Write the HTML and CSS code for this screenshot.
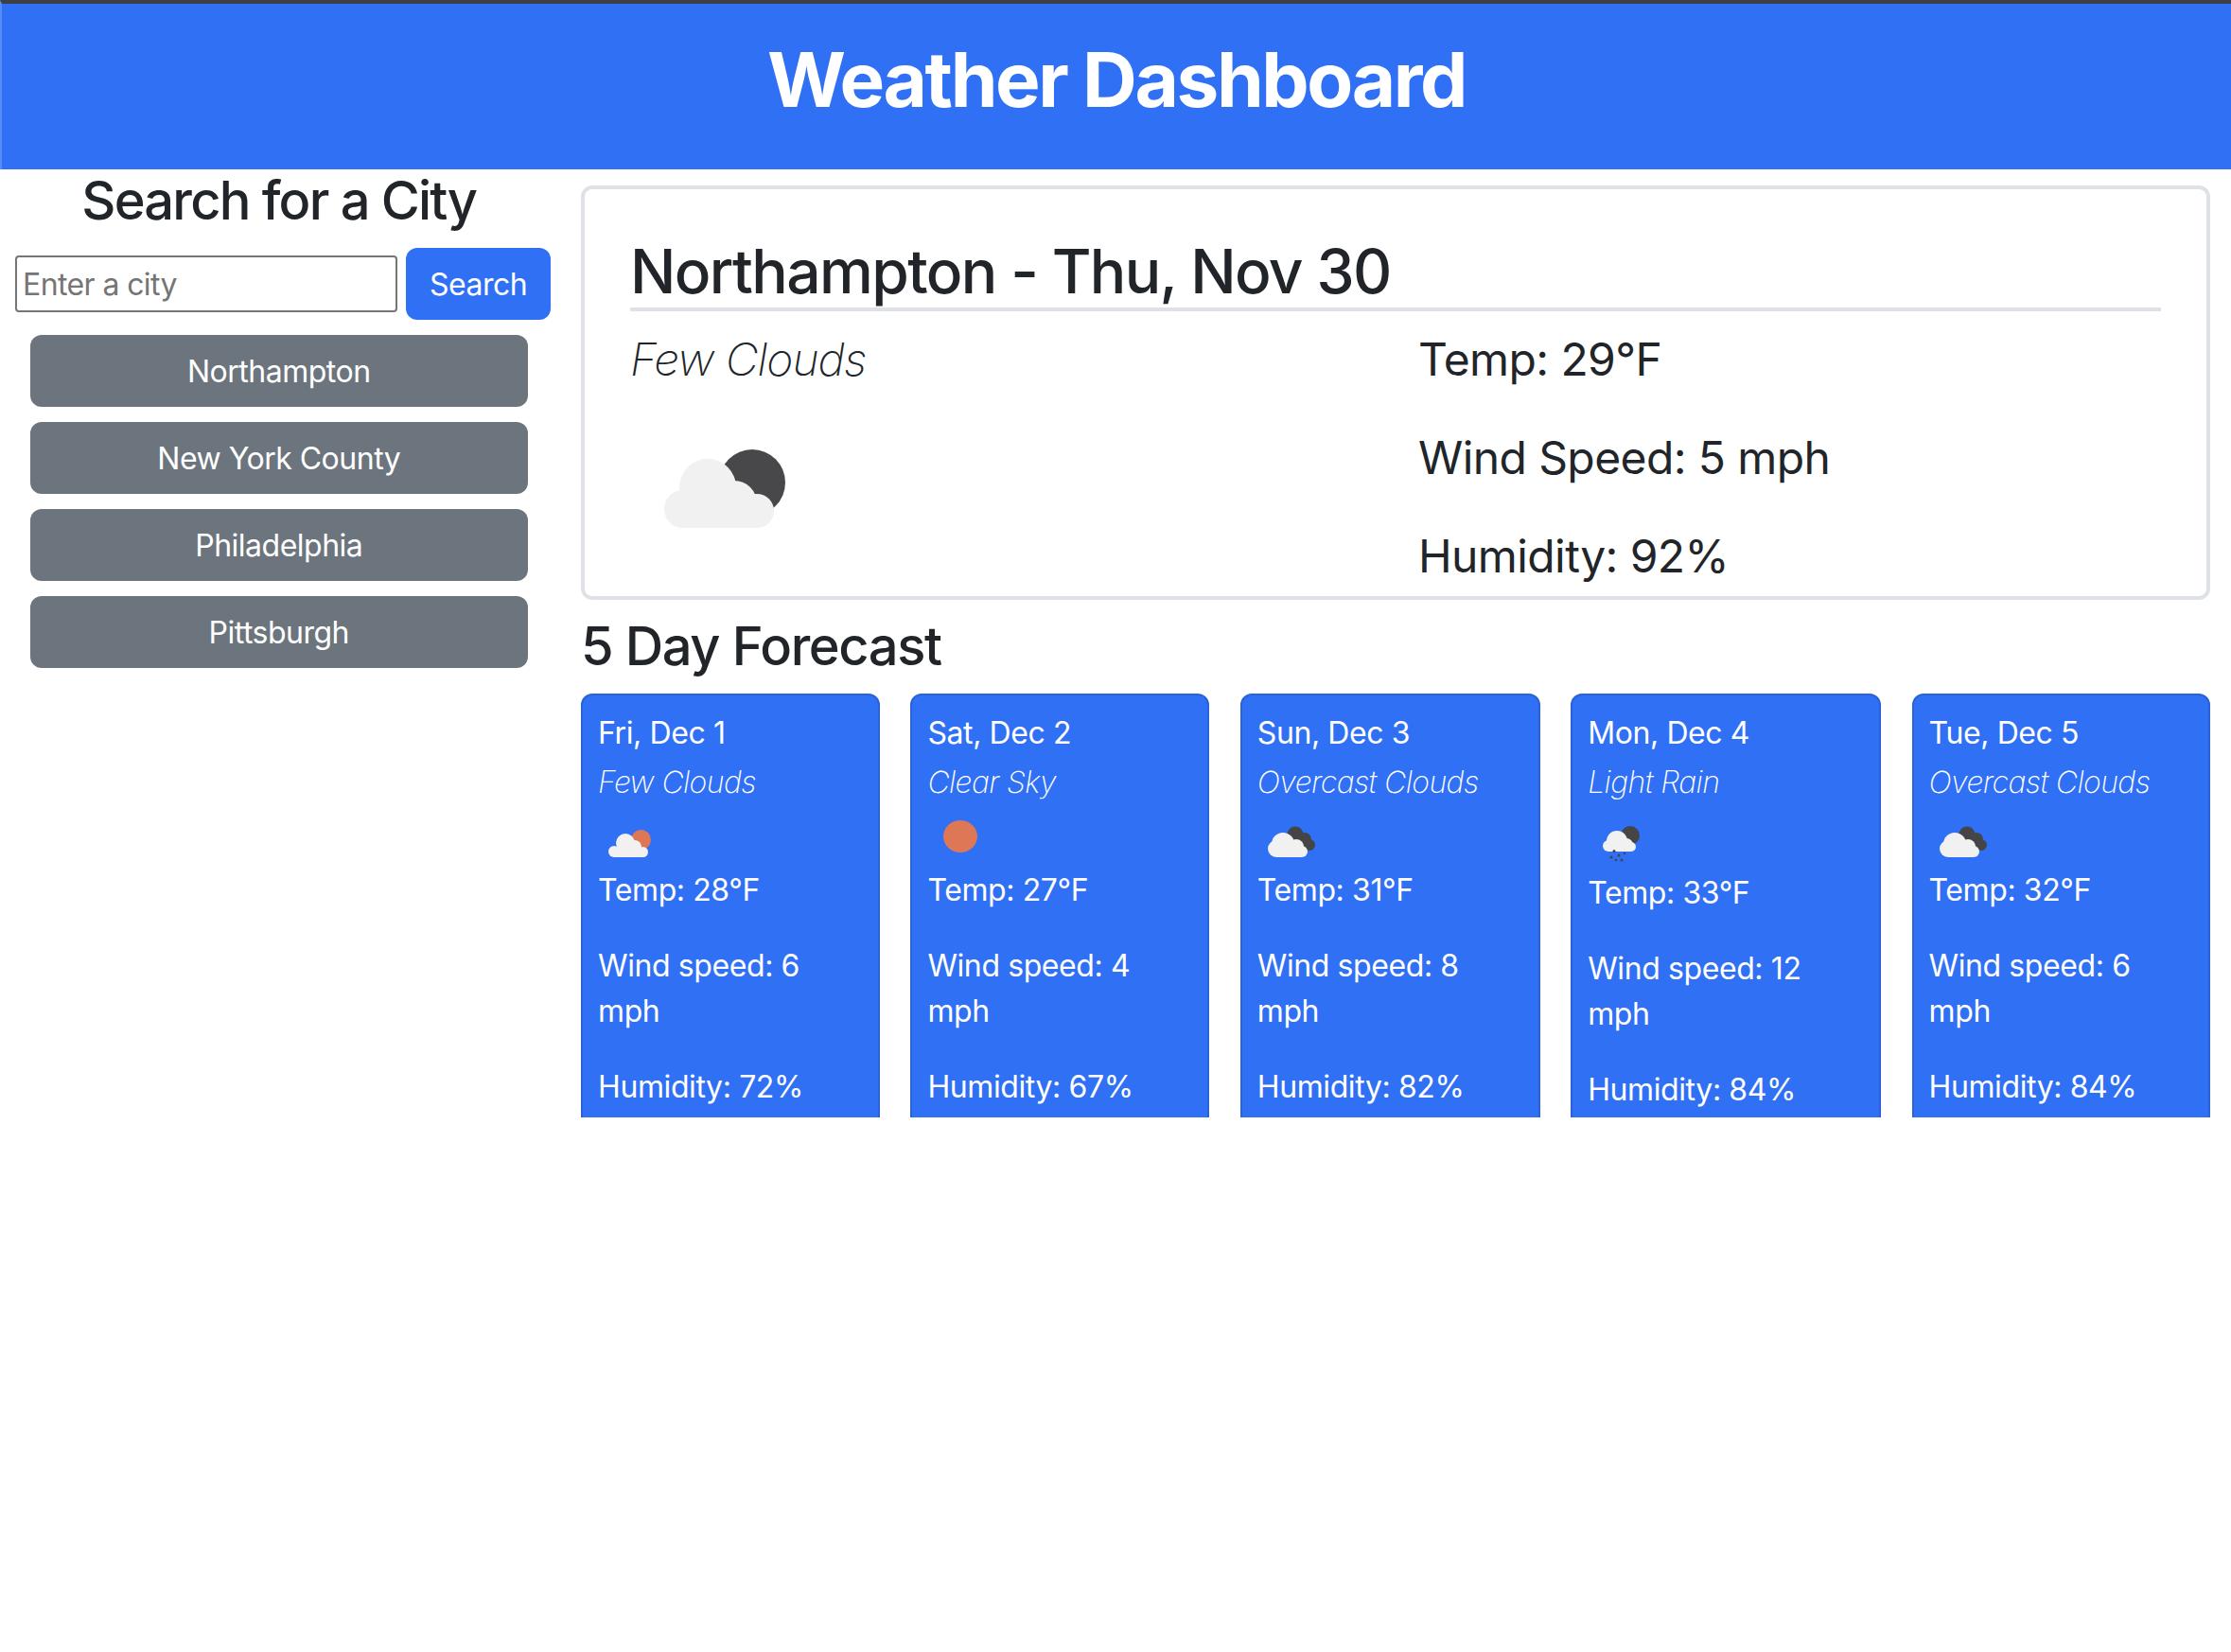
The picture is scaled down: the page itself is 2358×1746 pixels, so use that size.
FILE: index.html
```html
<!DOCTYPE html>
<html>
<head>
  <title>Weather Dashboard</title>
  <link rel="stylesheet" href="styles.css">
</head>
<body>
  <svg class="defs" width="0" height="0">
    <symbol id="cloud-few" viewBox="0 0 66 66">
      <circle cx="54" cy="0" r="0"/>
      <circle cx="45.5" cy="36.5" r="10.5" fill="#dd7755"/>
      <g fill="#f1f1f1">
        <circle cx="29" cy="40" r="10"/>
        <circle cx="17" cy="49" r="6"/>
        <circle cx="39" cy="44" r="7"/>
        <circle cx="47.5" cy="49.5" r="5.5"/>
        <rect x="17" y="45" width="31" height="10"/>
      </g>
    </symbol>
    <symbol id="sun" viewBox="0 0 66 66">
      <ellipse cx="35" cy="33" rx="18" ry="17" fill="#dd7755"/>
    </symbol>
    <symbol id="cloud-overcast" viewBox="0 0 66 66">
      <g fill="#454547">
        <circle cx="40" cy="31" r="8.5"/>
        <circle cx="50" cy="36" r="7"/>
        <circle cx="55" cy="42" r="6"/>
      </g>
      <g fill="#f1f1f1">
        <circle cx="27" cy="41" r="12"/>
        <circle cx="20" cy="46" r="9"/>
        <circle cx="41" cy="44" r="8"/>
        <circle cx="47" cy="49" r="6"/>
        <rect x="20" y="45" width="27" height="10"/>
      </g>
    </symbol>
    <symbol id="cloud-rain" viewBox="0 0 66 69">
      <circle cx="45" cy="32" r="10" fill="#454547"/>
      <g fill="#f1f1f1">
        <circle cx="31" cy="38" r="11"/>
        <circle cx="22" cy="43" r="6"/>
        <circle cx="41" cy="42" r="7"/>
        <circle cx="46" cy="44" r="5"/>
        <rect x="22" y="40" width="24" height="9"/>
      </g>
      <g fill="#454547">
        <circle cx="28" cy="48.5" r="1.5"/>
        <circle cx="33" cy="53" r="1.5"/>
        <circle cx="39" cy="51" r="1.2"/>
        <circle cx="25" cy="55" r="1.5"/>
        <circle cx="30" cy="58" r="1.3"/>
        <circle cx="36" cy="58" r="1.5"/>
      </g>
    </symbol>
  </svg>

  <header class="header">
    <h1>Weather Dashboard</h1>
  </header>

  <div class="main">
    <aside class="sidebar">
      <h3 class="sidebar-title">Search for a City</h3>
      <form class="search-form">
        <input class="search-input" type="text" placeholder="Enter a city">
        <button class="btn btn-primary" type="button">Search</button>
      </form>
      <div class="history">
        <button class="btn btn-secondary" type="button">Northampton</button>
        <button class="btn btn-secondary" type="button">New York County</button>
        <button class="btn btn-secondary" type="button">Philadelphia</button>
        <button class="btn btn-secondary" type="button">Pittsburgh</button>
      </div>
    </aside>

    <main class="content">
      <section class="current">
        <h2 class="current-title">Northampton - Thu, Nov 30</h2>
        <div class="current-body">
          <div class="current-left">
            <p class="current-desc">Few Clouds</p>
            <svg class="current-icon" width="180" height="130" viewBox="0 0 180 130">
              <circle cx="129" cy="70" r="35" fill="#48484a"/>
              <g fill="#f1f1f1">
                <circle cx="82" cy="75" r="30"/>
                <circle cx="56" cy="98" r="20"/>
                <circle cx="110" cy="92" r="24"/>
                <circle cx="134" cy="100" r="18"/>
                <rect x="56" y="85" width="78" height="33"/>
              </g>
            </svg>
          </div>
          <div class="current-right">
            <p>Temp: 29°F</p>
            <p>Wind Speed: 5 mph</p>
            <p>Humidity: 92%</p>
          </div>
        </div>
      </section>

      <h3 class="forecast-title">5 Day Forecast</h3>
      <div class="forecast">
        <div class="day">
          <h5>Fri, Dec 1</h5>
          <div class="day-desc">Few Clouds</div>
          <svg class="day-icon"><use href="#cloud-few"/></svg>
          <p>Temp: 28°F</p>
          <p>Wind speed: 6 mph</p>
          <p>Humidity: 72%</p>
        </div>
        <div class="day">
          <h5>Sat, Dec 2</h5>
          <div class="day-desc">Clear Sky</div>
          <svg class="day-icon"><use href="#sun"/></svg>
          <p>Temp: 27°F</p>
          <p>Wind speed: 4 mph</p>
          <p>Humidity: 67%</p>
        </div>
        <div class="day">
          <h5>Sun, Dec 3</h5>
          <div class="day-desc">Overcast Clouds</div>
          <svg class="day-icon"><use href="#cloud-overcast"/></svg>
          <p>Temp: 31°F</p>
          <p>Wind speed: 8 mph</p>
          <p>Humidity: 82%</p>
        </div>
        <div class="day day-rain">
          <h5>Mon, Dec 4</h5>
          <div class="day-desc">Light Rain</div>
          <svg class="day-icon"><use href="#cloud-rain"/></svg>
          <p>Temp: 33°F</p>
          <p>Wind speed: 12 mph</p>
          <p>Humidity: 84%</p>
        </div>
        <div class="day">
          <h5>Tue, Dec 5</h5>
          <div class="day-desc">Overcast Clouds</div>
          <svg class="day-icon"><use href="#cloud-overcast"/></svg>
          <p>Temp: 32°F</p>
          <p>Wind speed: 6 mph</p>
          <p>Humidity: 84%</p>
        </div>
      </div>
    </main>
  </div>
</body>
</html>
```

FILE: styles.css
```css
* {
  box-sizing: border-box;
}

body {
  margin: 0;
  font-family: Inter, "Liberation Sans", sans-serif;
  font-size: 32px;
  line-height: 48px;
  color: #212529;
  background: #fff;
}

h1, h2, h3, h5, p {
  margin: 0;
}

.defs {
  position: absolute;
}

.header {
  height: 179px;
  border-top: 4px solid #3d4045;
  border-left: 2px solid #5a8cf8;
  background: #3070f5;
  color: #fff;
  text-align: center;
  padding-top: 32px;
}

.header h1 {
  font-size: 80px;
  line-height: 96px;
  font-weight: 700;
  letter-spacing: -2.4px;
}

.main {
  display: grid;
  grid-template-columns: 25% 75%;
}

/* left column */
.sidebar-title {
  font-size: 56px;
  line-height: 67px;
  font-weight: 500;
  letter-spacing: -1.8px;
  text-align: center;
  margin-bottom: 16px;
}

.search-form {
  display: flex;
  align-items: center;
  gap: 9px;
  padding-left: 16px;
  margin-bottom: 16px;
}

.search-input {
  width: 404px;
  height: 60px;
  padding: 0 6px;
  border: 2px solid #767676;
  border-radius: 4px;
  font-family: inherit;
  font-size: 32px;
  letter-spacing: -0.6px;
}

.search-input::placeholder {
  color: #757575;
}

.btn {
  height: 76px;
  border: 2px solid transparent;
  border-radius: 12px;
  font-family: inherit;
  font-size: 32px;
  letter-spacing: -0.5px;
  color: #fff;
}

.btn-primary {
  width: 153px;
  background: #3070f5;
}

.btn-secondary {
  background: #6c757d;
}

.history {
  display: flex;
  flex-direction: column;
  gap: 16px;
  padding: 0 32px;
}

/* right column */
.content {
  padding: 17px 22px 0 24.5px;
}

.current {
  height: 438px;
  border: 4px solid #dee2e6;
  border-radius: 12px;
  padding: 48px 48px 0;
  margin-bottom: 16px;
  overflow: hidden;
}

.current-title {
  font-size: 64px;
  line-height: 77px;
  font-weight: 500;
  letter-spacing: -1.6px;
  border-bottom: 4px solid #dee2e6;
  margin-bottom: 15px;
}

.current-body {
  display: grid;
  grid-template-columns: 50% 50%;
  font-size: 48px;
  line-height: 72px;
}

.current-desc {
  font-style: italic;
  font-weight: 200;
  letter-spacing: -1px;
}

.current-icon {
  display: block;
  margin-top: 24px;
}

.current-right {
  padding-left: 24px;
  display: flex;
  flex-direction: column;
  gap: 32px;
  letter-spacing: -0.6px;
}

.forecast-title {
  font-size: 56px;
  line-height: 67px;
  font-weight: 500;
  letter-spacing: -1.4px;
  margin-bottom: 16px;
}

.forecast {
  display: grid;
  grid-template-columns: 316px 316px 317px 328px 315px;
  gap: 32.4px;
  height: 448px;
}

.day {
  background: #3070f5;
  border: 2px solid #2a62d7;
  border-radius: 12px;
  padding: 16px;
  color: #fff;
  letter-spacing: -0.4px;
}

.day h5 {
  font-size: 32px;
  line-height: 48px;
  font-weight: 400;
  margin-bottom: 4px;
}

.day-desc {
  font-style: italic;
  font-weight: 200;
  letter-spacing: -0.6px;
}

.day-icon {
  display: block;
  width: 66px;
  height: 66px;
}

.day-rain .day-icon {
  height: 69px;
}

.day p {
  margin-bottom: 32px;
}

.day p:last-child {
  margin-bottom: 0;
}
```
